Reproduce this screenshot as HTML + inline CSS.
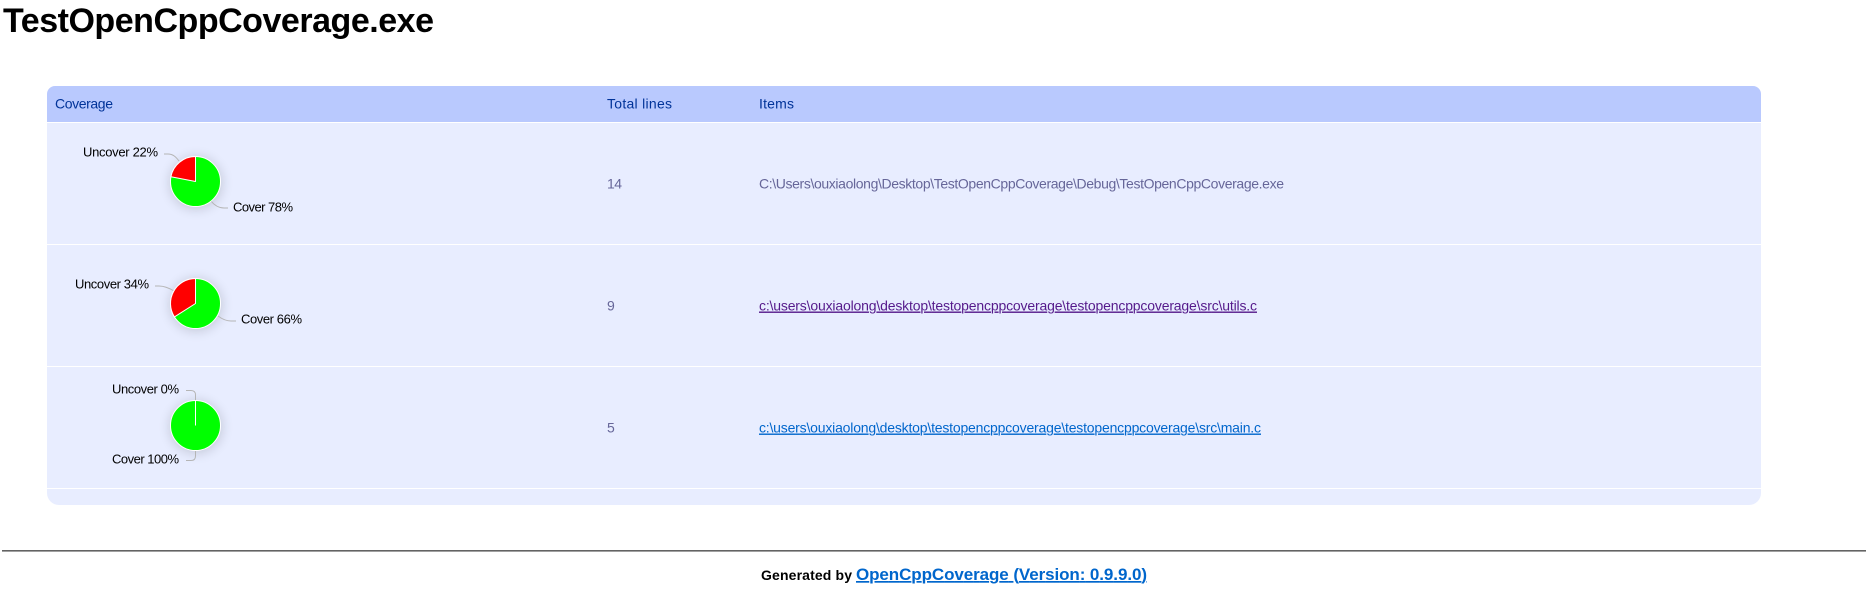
<!DOCTYPE html>
<html>
<head>
<meta charset="utf-8">
<title>TestOpenCppCoverage.exe</title>
<style>
html,body{margin:0;padding:0;background:#fff;width:1866px;height:593px;overflow:hidden}
svg{display:block}
.h{font:14px "Liberation Sans",sans-serif;fill:#039}
.t{font:14px "Liberation Sans",sans-serif;fill:#669}
.l{font:13px "Liberation Sans",sans-serif;fill:#000}
.c{fill:none;stroke:#b5b5b5;stroke-width:1}
.a{font:14px "Liberation Sans",sans-serif;text-decoration:underline}
</style>
</head>
<body>
<svg width="1866" height="593" viewBox="0 0 1866 593" xmlns="http://www.w3.org/2000/svg">
<defs>
<filter id="s" x="-60%" y="-60%" width="220%" height="220%">
<feGaussianBlur stdDeviation="6"/>
</filter>
</defs>

<text x="3" y="32" textLength="431" lengthAdjust="spacing" style="font:bold 34px 'Liberation Sans',sans-serif" fill="#000">TestOpenCppCoverage.exe</text>

<path d="M47 94a8 8 0 0 1 8-8H1753a8 8 0 0 1 8 8V122H47Z" fill="#b9c9fe"/>
<path d="M47 123H1761V493a12 12 0 0 1-12 12H59a12 12 0 0 1-12-12Z" fill="#e8edff"/>
<rect x="47" y="122" width="1714" height="1" fill="#fff"/>
<rect x="47" y="244" width="1714" height="1" fill="#fff"/>
<rect x="47" y="366" width="1714" height="1" fill="#fff"/>
<rect x="47" y="488" width="1714" height="1" fill="#fff"/>

<text class="h" x="55" y="108.500" textLength="58" lengthAdjust="spacing">Coverage</text>
<text class="h" x="607" y="108.500" textLength="65" lengthAdjust="spacing">Total lines</text>
<text class="h" x="759" y="108.500" textLength="35" lengthAdjust="spacing">Items</text>

<text class="t" x="607" y="188.500" textLength="15" lengthAdjust="spacing">14</text>
<text class="t" x="607" y="310.500">9</text>
<text class="t" x="607" y="432.500">5</text>

<text class="t" x="759" y="188.500" textLength="525" lengthAdjust="spacing">C:\Users\ouxiaolong\Desktop\TestOpenCppCoverage\Debug\TestOpenCppCoverage.exe</text>
<text class="a" fill="#551a8b" x="759" y="310.500" textLength="498" lengthAdjust="spacing">c:\users\ouxiaolong\desktop\testopencppcoverage\testopencppcoverage\src\utils.c</text>
<text class="a" fill="#0066cc" x="759" y="432.500" textLength="502" lengthAdjust="spacing">c:\users\ouxiaolong\desktop\testopencppcoverage\testopencppcoverage\src\main.c</text>

<!-- Pie 1 -->
<circle cx="196" cy="183" r="26" fill="#000" opacity=".16" filter="url(#s)"/>
<path class="c" d="M164 154H168C173 154 176 157 179 161"/>
<path class="c" d="M211 201C215 206 219 208 224 208H228"/>
<circle cx="195.5" cy="181.5" r="25" fill="#0f0" stroke="#fff" stroke-width="1"/>
<path d="M195.5 181.5V156.5A25 25 0 0 0 170.9 176.8Z" fill="#f00" stroke="#fff" stroke-width="1" stroke-linejoin="round"/>
<text class="l" x="83" y="156.5" textLength="75" lengthAdjust="spacing">Uncover 22%</text>
<text class="l" x="233" y="211.5" textLength="60" lengthAdjust="spacing">Cover 78%</text>

<!-- Pie 2 -->
<circle cx="196" cy="305" r="26" fill="#000" opacity=".16" filter="url(#s)"/>
<path class="c" d="M155 286H159C164 286 169 288 174 291"/>
<path class="c" d="M218 316C222 319 226 321 231 321H236"/>
<circle cx="195.5" cy="303.5" r="25" fill="#0f0" stroke="#fff" stroke-width="1"/>
<path d="M195.5 303.5V278.5A25 25 0 0 0 174.4 316.9Z" fill="#f00" stroke="#fff" stroke-width="1" stroke-linejoin="round"/>
<text class="l" x="75" y="288.5" textLength="74" lengthAdjust="spacing">Uncover 34%</text>
<text class="l" x="241" y="323.5" textLength="61" lengthAdjust="spacing">Cover 66%</text>

<!-- Pie 3 -->
<circle cx="196" cy="427" r="26" fill="#000" opacity=".16" filter="url(#s)"/>
<path class="c" d="M186 390.500H191C194 390.500 195.500 392 195.500 395V401"/>
<path class="c" d="M195.500 450V456C195.500 459 194 460.500 191 460.500H186"/>
<circle cx="195.500" cy="425.500" r="25" fill="#0f0" stroke="#fff" stroke-width="1"/>
<path d="M195.500 425.500V400.500" stroke="#fff" stroke-width="1" fill="none"/>
<text class="l" x="112" y="393.500" textLength="67" lengthAdjust="spacing">Uncover 0%</text>
<text class="l" x="112" y="463.500" textLength="67" lengthAdjust="spacing">Cover 100%</text>

<rect x="2" y="550" width="1864" height="1" fill="#636363"/>
<rect x="2" y="551" width="1864" height="1" fill="#a0a0a0"/>

<text x="761" y="580" textLength="91" lengthAdjust="spacing" style="font:bold 14px 'Liberation Sans',sans-serif" fill="#000">Generated by</text>
<text x="856" y="580" textLength="291" lengthAdjust="spacing" style="font:bold 17px 'Liberation Sans',sans-serif;text-decoration:underline" fill="#0066cc">OpenCppCoverage (Version: 0.9.9.0)</text>
</svg>
</body>
</html>
